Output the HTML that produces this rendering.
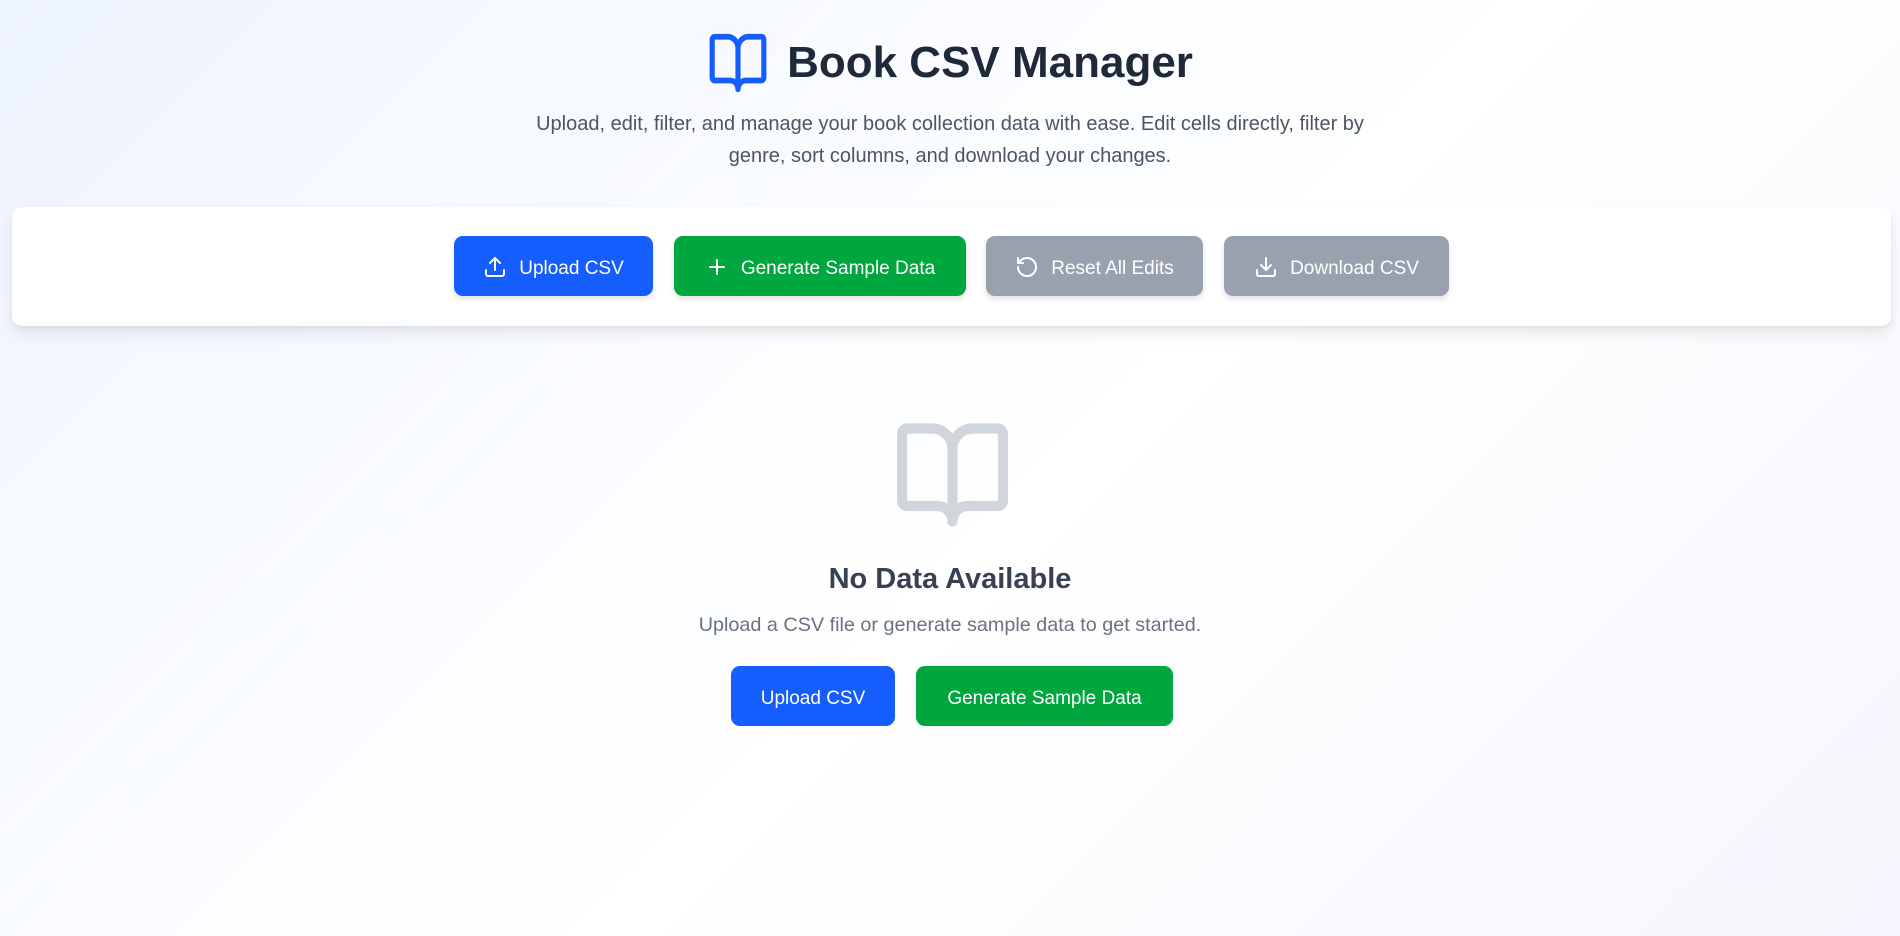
<!DOCTYPE html>
<html><head><meta charset="utf-8"><style>
*{box-sizing:border-box;margin:0;padding:0}
body{width:1900px;height:936px;overflow:hidden;font-family:"Liberation Sans",sans-serif;background:linear-gradient(135deg,#edf3ff 0%,#fafcff 35%,#ffffff 55%,#f7f4fd 100%);position:relative}
.title{position:absolute;top:28px;left:0;width:1900px;display:flex;justify-content:center;align-items:center;gap:18px}
.title h1{font-size:44px;font-weight:bold;color:#1e2939;letter-spacing:0px}
.sub{position:absolute;top:108px;left:0;width:1900px;text-align:center;font-size:20px;line-height:32px;color:#4a5565}
.card{position:absolute;left:12px;top:207px;width:1879px;height:119px;background:#fff;border-radius:10px;box-shadow:0 8px 16px rgba(0,0,0,.08),0 2px 4px rgba(0,0,0,.05)}
.btn{position:absolute;height:60px;padding-top:6px;border-radius:9px;color:#fff;font-size:19px;display:flex;align-items:center;justify-content:center;gap:12px;box-shadow:0 3px 6px rgba(0,0,0,.12)}
.btn svg{margin-top:-4px}
.blue{background:#155dfc}.green{background:#00a63e}.gray{background:#99a1af}
.h2{position:absolute;top:563px;width:1900px;text-align:center;font-size:29px;font-weight:bold;color:#364153}
.p{position:absolute;top:614px;width:1900px;text-align:center;font-size:19.8px;color:#6a7282}
svg.i{fill:none;stroke:currentColor;stroke-width:2;stroke-linecap:round;stroke-linejoin:round}
</style></head><body>
<div class="title"><svg class="i" width="62" height="70" viewBox="0 0 24 24" preserveAspectRatio="none" style="color:#155dfc"><path d="M12 7v14"/><path d="M3 18a1 1 0 0 1-1-1V4a1 1 0 0 1 1-1h5a4 4 0 0 1 4 4 4 4 0 0 1 4-4h5a1 1 0 0 1 1 1v13a1 1 0 0 1-1 1h-6a3 3 0 0 0-3 3 3 3 0 0 0-3-3z"/></svg><h1>Book CSV Manager</h1></div>
<div class="sub">Upload, edit, filter, and manage your book collection data with ease. Edit cells directly, filter by<br>genre, sort columns, and download your changes.</div>
<div class="card"></div>
<div class="btn blue" style="left:454px;top:236px;width:199px"><svg class="i" width="24" height="24" viewBox="0 0 24 24"><path d="M21 15v4a2 2 0 0 1-2 2H5a2 2 0 0 1-2-2v-4"/><path d="M17 8l-5-5-5 5"/><path d="M12 3v12"/></svg>Upload CSV</div>
<div class="btn green" style="left:674px;top:236px;width:292px"><svg class="i" width="24" height="24" viewBox="0 0 24 24"><path d="M5 12h14"/><path d="M12 5v14"/></svg>Generate Sample Data</div>
<div class="btn gray" style="left:986px;top:236px;width:217px"><svg class="i" width="24" height="24" viewBox="0 0 24 24"><path d="M3 12a9 9 0 1 0 9-9 9.75 9.75 0 0 0-6.74 2.74L3 8"/><path d="M3 3v5h5"/></svg>Reset All Edits</div>
<div class="btn gray" style="left:1224px;top:236px;width:225px"><svg class="i" width="24" height="24" viewBox="0 0 24 24"><path d="M21 15v4a2 2 0 0 1-2 2H5a2 2 0 0 1-2-2v-4"/><path d="M7 10l5 5 5-5"/><path d="M12 15V3"/></svg>Download CSV</div>
<svg class="i" width="121" height="124" viewBox="0 0 24 24" preserveAspectRatio="none" style="position:absolute;left:892px;top:413px;color:#d1d5dc"><path d="M12 7v14"/><path d="M3 18a1 1 0 0 1-1-1V4a1 1 0 0 1 1-1h5a4 4 0 0 1 4 4 4 4 0 0 1 4-4h5a1 1 0 0 1 1 1v13a1 1 0 0 1-1 1h-6a3 3 0 0 0-3 3 3 3 0 0 0-3-3z"/></svg>
<div class="h2">No Data Available</div>
<div class="p">Upload a CSV file or generate sample data to get started.</div>
<div class="btn blue" style="left:731px;top:666px;width:164px;box-shadow:none">Upload CSV</div>
<div class="btn green" style="left:916px;top:666px;width:257px;box-shadow:none">Generate Sample Data</div>
</body></html>
